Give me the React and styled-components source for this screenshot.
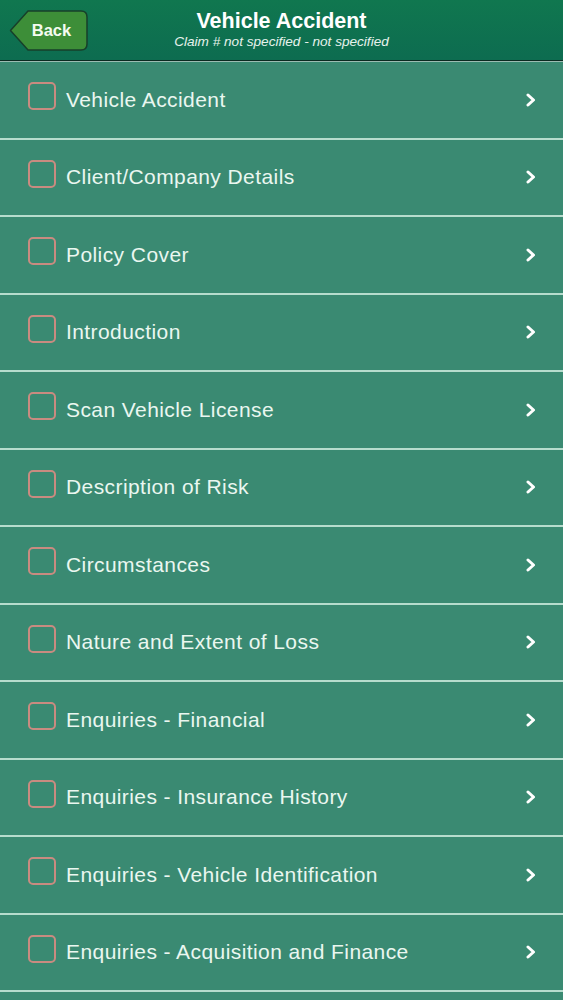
import React from "react";
import styled, { createGlobalStyle } from "styled-components";

const GlobalStyle = createGlobalStyle`
  html, body {
    margin: 0;
    padding: 0;
    background: #3a8a72;
    font-family: "Liberation Sans", Arial, sans-serif;
  }
`;

const sections = [
  "Vehicle Accident",
  "Client/Company Details",
  "Policy Cover",
  "Introduction",
  "Scan Vehicle License",
  "Description of Risk",
  "Circumstances",
  "Nature and Extent of Loss",
  "Enquiries - Financial",
  "Enquiries - Insurance History",
  "Enquiries - Vehicle Identification",
  "Enquiries - Acquisition and Finance",
];

const Screen = styled.div`
  width: 563px;
  height: 1000px;
  overflow: hidden;
  display: flex;
  flex-direction: column;
  background: #3a8a72;
`;

const NavBar = styled.header`
  height: 60px;
  flex-shrink: 0;
  display: grid;
  grid-template-columns: 100px 1fr 100px;
  align-items: center;
  background: linear-gradient(#10774f, #0d6c50);
  border-bottom: 1px solid #0b2a20;
  box-shadow: 0 1px 0 #9cbcb2;
  position: relative;
  z-index: 1;
`;

const BackButton = styled.div`
  margin-left: 9px;
  margin-top: 1px;
  width: 79px;
  height: 41px;
  position: relative;
  display: flex;
  align-items: center;
  justify-content: center;
  padding-left: 6px;
  box-sizing: border-box;
  color: #f4fbf0;
  font-weight: 700;
  font-size: 16.5px;

  svg {
    position: absolute;
    inset: 0;
  }

  span {
    position: relative;
  }
`;

const TitleBlock = styled.div`
  display: flex;
  flex-direction: column;
  align-items: center;
  color: #ffffff;
  margin-top: -2px;
`;

const Title = styled.div`
  font-size: 21.5px;
  font-weight: 700;
  line-height: 24px;
  white-space: nowrap;
`;

const Subtitle = styled.div`
  font-size: 13.6px;
  font-style: italic;
  line-height: 17px;
  color: #e6f2ec;
  white-space: nowrap;
`;

const List = styled.ul`
  list-style: none;
  margin: 1px 0 0;
  padding: 0;
`;

const Row = styled.li`
  box-sizing: border-box;
  height: 77.5px;
  display: flex;
  align-items: center;
  padding: 0 26px 0 28px;
  background: #3a8a72;
  border-bottom: 2px solid #b6dccd;
`;

const Check = styled.span`
  width: 24px;
  height: 24px;
  border: 2px solid #c98b80;
  border-radius: 5px;
  flex-shrink: 0;
  margin-top: -7px;
`;

const Label = styled.span`
  flex: 1;
  margin-left: 10px;
  font-size: 21px;
  letter-spacing: 0.42px;
  color: #eaf7f0;
  white-space: nowrap;
`;

const Chevron = () => (
  <svg width="12" height="14" viewBox="0 0 12 14">
    <path
      d="M3 2 L8.5 7 L3 12"
      fill="none"
      stroke="#ffffff"
      strokeWidth="3"
      strokeLinecap="round"
      strokeLinejoin="round"
    />
  </svg>
);

export default function App() {
  return (
    <Screen>
      <GlobalStyle />
      <NavBar>
        <BackButton>
          <svg width="79" height="41" viewBox="0 0 79 41">
            <path
              d="M19 1 H72 Q78 1 78 7 V34 Q78 40 72 40 H19 L1.5 20.5 Z"
              fill="#3d8e38"
              stroke="#173f2a"
              strokeWidth="1.5"
              strokeLinejoin="round"
            />
          </svg>
          <span>Back</span>
        </BackButton>
        <TitleBlock>
          <Title>Vehicle Accident</Title>
          <Subtitle>Claim # not specified - not specified</Subtitle>
        </TitleBlock>
        <div />
      </NavBar>
      <List>
        {sections.map((s) => (
          <Row key={s}>
            <Check />
            <Label>{s}</Label>
            <Chevron />
          </Row>
        ))}
      </List>
    </Screen>
  );
}
